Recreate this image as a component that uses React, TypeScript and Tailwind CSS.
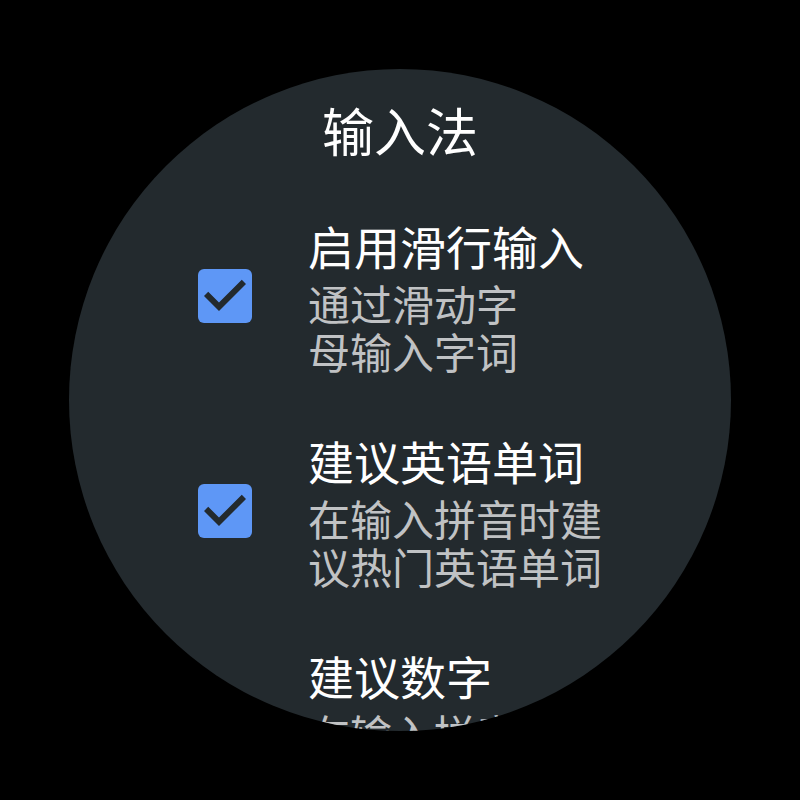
import React from 'react';

interface OptionItem {
  title: string;
  lines: string[];
  checked: boolean;
}

const options: OptionItem[] = [
  { title: '启用滑行输入', lines: ['通过滑动字', '母输入字词'], checked: true },
  { title: '建议英语单词', lines: ['在输入拼音时建', '议热门英语单词'], checked: true },
  { title: '建议数字', lines: ['在输入拼音', '时建议数字'], checked: true },
];

const font = { fontFamily: '"Noto Sans CJK SC", "Noto Sans", sans-serif' };

const CheckBox: React.FC<{ checked: boolean }> = ({ checked }) => (
  <div
    className={
      checked
        ? 'w-[54px] h-[54px] shrink-0 rounded-[6px] bg-[#5e97f6] flex items-center justify-center'
        : 'w-[54px] h-[54px] shrink-0 rounded-[6px] border-[6px] border-[#bdc1c6]'
    }
  >
    {checked && (
      <svg width="54" height="54" viewBox="3 3 18 18">
        <path d="M10 17l-5-5 1.41-1.41L10 14.17l7.59-7.59L19 8l-9 9z" fill="#232a2e" />
      </svg>
    )}
  </div>
);

const App: React.FC = () => {
  return (
    <div className="w-[800px] h-[800px] bg-black flex items-center justify-center" style={font}>
      <div className="w-[662px] h-[662px] rounded-full bg-[#232a2e] overflow-hidden flex flex-col">
        {/* Title */}
        <div className="pt-[33px] text-center text-white text-[52px] leading-[56px]">输入法</div>

        {/* Options */}
        <div className="flex flex-col gap-[57px] mt-[59px]">
          {options.map((opt) => (
            <div key={opt.title} className="flex items-center pl-[129px]">
              <CheckBox checked={opt.checked} />
              <div className="ml-[56px] flex flex-col">
                <div className="text-[46px] leading-[56px] text-white whitespace-nowrap">{opt.title}</div>
                <div className="mt-[6px] text-[42px] leading-[48px] text-[#c0c2c4] whitespace-nowrap">
                  {opt.lines.map((line) => (
                    <div key={line}>{line}</div>
                  ))}
                </div>
              </div>
            </div>
          ))}
        </div>
      </div>
    </div>
  );
};

export default App;
